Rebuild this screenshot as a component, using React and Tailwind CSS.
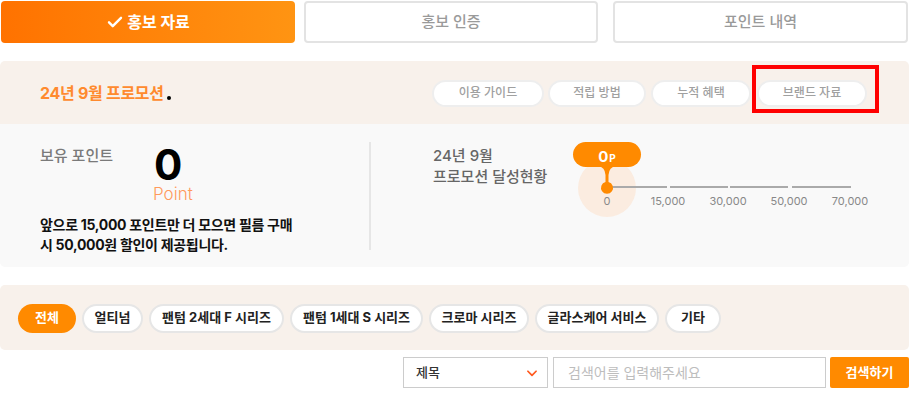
import React from "react";

const F = { fontFamily: "Inter, 'Noto Sans CJK KR', 'Noto Sans', sans-serif" };

function Check() {
  return (
    <svg width="18" height="18" viewBox="0 0 24 24" fill="none" stroke="white" strokeWidth="3.2" strokeLinecap="round" strokeLinejoin="round">
      <path d="M4 12.5l5 5L20 6.5" />
    </svg>
  );
}

function HeaderPill({ w, children }) {
  return (
    <div className={`h-[27px] ${w} rounded-full bg-white border-2 border-[#eeeeee] flex items-center justify-center text-[12px] text-[#a0a0a0] font-medium`}>
      {children}
    </div>
  );
}

function FilterPill({ w, active, children }) {
  return active ? (
    <div className={`h-[29px] ${w} rounded-full bg-[#ff8a00] flex items-center justify-center text-[13px] text-white font-bold`}>
      {children}
    </div>
  ) : (
    <div className={`h-[29px] ${w} rounded-full bg-white border-2 border-[#e6e6e6] flex items-center justify-center text-[13px] text-[#222] font-bold`}>
      {children}
    </div>
  );
}

function Chart() {
  const labels = [
    ["0", 37],
    ["15,000", 98],
    ["30,000", 158],
    ["50,000", 219],
    ["70,000", 280],
  ];
  return (
    <div className="relative w-[300px] h-[90px]">
      <svg className="absolute left-0 top-0" width="300" height="90" viewBox="0 0 300 90">
        <circle cx="37" cy="49" r="29" fill="#fbece0" />
        <rect x="40" y="47" width="57" height="2" fill="#aaaaaa" />
        <rect x="100" y="47" width="58" height="2" fill="#aaaaaa" />
        <rect x="160" y="47" width="58" height="2" fill="#aaaaaa" />
        <rect x="222" y="47" width="59" height="2" fill="#aaaaaa" />
        <rect x="3" y="3" width="68" height="25" rx="12.5" fill="#ff8a00" />
        <path d="M28 27 Q35 28 35.5 36 L35.5 43 A6 6 0 1 0 38.5 43 L38.5 36 Q39 28 46 27 Z" fill="#ff8a00" />
      </svg>
      <div className="absolute left-[3px] top-[3px] w-[68px] h-[25px] flex items-end justify-center pb-[3px] text-white font-bold">
        <span className="text-[15px] leading-none">0</span>
        <span className="text-[10px] leading-none ml-[1px] mb-[1px]">P</span>
      </div>
      {labels.map(([t, x]) => (
        <div key={t} className="absolute top-[55px] w-[60px] -ml-[30px] text-center text-[11px] leading-[14px] text-[#888]" style={{ left: x }}>
          {t}
        </div>
      ))}
    </div>
  );
}

export default function App() {
  return (
    <div className="w-[911px] h-[395px] bg-white overflow-hidden relative" style={F}>
      {/* Tabs */}
      <div className="flex pt-[1px] pl-[1px]">
        <div className="w-[294px] h-[42px] rounded-[4px] bg-gradient-to-r from-[#ff7200] to-[#ff9412] flex items-center justify-center gap-[3px] text-white text-[16px] font-bold">
          <Check />
          <span>홍보 자료</span>
        </div>
        <div className="ml-[9px] w-[294px] h-[42px] rounded-[4px] border-2 border-[#e3e3e3] bg-white flex items-center justify-center text-[15px] text-[#9a9a9a] font-medium">
          홍보 인증
        </div>
        <div className="ml-[15px] w-[295px] h-[42px] rounded-[4px] border-2 border-[#e3e3e3] bg-white flex items-center justify-center text-[15px] text-[#9a9a9a] font-medium">
          포인트 내역
        </div>
      </div>

      {/* Promo card */}
      <div className="mt-[18px] w-[909px]">
        <div className="h-[63px] rounded-t-[5px] bg-[#f8f1eb] flex items-center justify-between pl-[40px] pr-[42px]">
          <div className="flex items-end">
            <span className="text-[16px] font-bold text-[#ff8a2e] tracking-[-0.3px]">24년 9월 프로모션</span>
            <span className="w-[4px] h-[4px] rounded-full bg-black ml-[3px] mb-[5px]" />
          </div>
          <div className="flex pt-[1px]">
            <HeaderPill w="w-[112px]">이용 가이드</HeaderPill>
            <div className="w-[4px]" />
            <HeaderPill w="w-[98px]">적립 방법</HeaderPill>
            <div className="w-[5px]" />
            <HeaderPill w="w-[100px]">누적 혜택</HeaderPill>
            <div className="w-[6px]" />
            <HeaderPill w="w-[110px]">브랜드 자료</HeaderPill>
          </div>
        </div>
        <div className="h-[143px] rounded-b-[5px] bg-[#f9f9f9] flex">
          <div className="w-[369px] pl-[40px] pt-[22px]">
            <div className="flex">
              <div className="w-[114px] text-[15px] font-medium text-[#7a7a7a] leading-[20px]">보유 포인트</div>
              <div className="flex flex-col pt-[3px]">
                <div className="text-[42px] font-bold leading-[32px] text-black">0</div>
                <div className="mt-[4px] text-[17px] font-light leading-[18px] text-[#ff9a5c] -ml-[1px]">Point</div>
              </div>
            </div>
            <div className="mt-[12px] text-[14px] font-bold leading-[20px] text-[#111] tracking-[-0.3px]">
              앞으로 15,000 포인트만 더 모으면 필름 구매
              <br />시 50,000원 할인이 제공됩니다.
            </div>
          </div>
          <div className="mt-[18px] w-[2px] h-[108px] bg-[#e6e6e6]" />
          <div className="pl-[62px] pt-[22px] w-[140px]">
            <div className="text-[15px] font-medium text-[#666] leading-[20px] whitespace-nowrap">24년 9월</div>
            <div className="text-[15px] font-medium text-[#666] leading-[22px] whitespace-nowrap">프로모션 달성현황</div>
          </div>
          <div className="ml-[59px] pt-[15px]">
            <Chart />
          </div>
        </div>
      </div>

      {/* Filter band */}
      <div className="mt-[18px] w-[909px] h-[65px] rounded-[5px] bg-[#f8f1eb] flex items-center pl-[18px] gap-[6px] pt-[1px]">
        <FilterPill w="w-[58px]" active>전체</FilterPill>
        <FilterPill w="w-[61px]">얼티넘</FilterPill>
        <FilterPill w="w-[135px]">팬텀 2세대 F 시리즈</FilterPill>
        <FilterPill w="w-[133px]">팬텀 1세대 S 시리즈</FilterPill>
        <FilterPill w="w-[100px]">크로마 시리즈</FilterPill>
        <FilterPill w="w-[124px]">글라스케어 서비스</FilterPill>
        <FilterPill w="w-[56px]">기타</FilterPill>
      </div>

      {/* Search row */}
      <div className="mt-[7px] w-[909px] flex justify-end">
        <div className="w-[145px] h-[31px] border border-[#cccccc] bg-white flex items-center justify-between pl-[12px] pr-[8px]">
          <span className="text-[13px] text-[#333] font-medium">제목</span>
          <svg width="14" height="14" viewBox="0 0 24 24" fill="none" stroke="#ff5a1f" strokeWidth="3" strokeLinecap="round" strokeLinejoin="round">
            <path d="M5 9l7 7 7-7" />
          </svg>
        </div>
        <div className="ml-[5px] w-[273px] h-[31px] border border-[#cccccc] bg-white flex items-center pl-[14px] text-[14px] text-[#bdbdbd]">
          검색어를 입력해주세요
        </div>
        <div className="ml-[4px] w-[79px] h-[31px] rounded-[2px] bg-[#ff8a00] flex items-center justify-center text-[13px] text-white font-bold">
          검색하기
        </div>
      </div>

      {/* Red annotation box */}
      <div className="absolute left-[752px] top-[65px] w-[127px] h-[48px] border-[4px] border-[#ff0000]" />
    </div>
  );
}
